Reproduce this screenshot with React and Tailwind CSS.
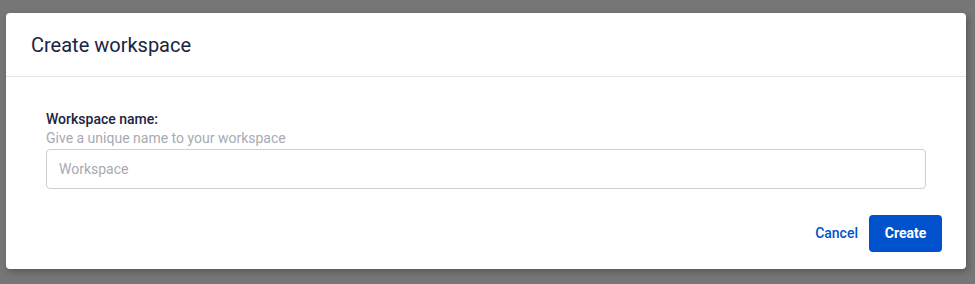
import React from 'react';

const App = () => {
  return (
    <div className="min-h-screen w-full bg-[#767676] pt-[13px] pl-[6px]" style={{ fontFamily: 'Roboto, "Liberation Sans", sans-serif' }}>
      <div className="w-[960px] h-[256px] bg-white rounded-[4px] shadow-[2px_3px_6px_rgba(0,0,0,0.25)] flex flex-col">
        <div className="h-[64px] flex items-center px-[25px] border-b border-[#e3e4e8]">
          <h2 className="text-[20px] text-[#1c2340] font-normal">Create workspace</h2>
        </div>
        <div className="px-[40px] pt-[32px]">
          <div className="text-[14px] leading-[20px] font-medium text-[#1c2340]">Workspace name:</div>
          <div className="text-[14px] leading-[18px] text-[#a8aab2]">Give a unique name to your workspace</div>
          <input
            className="mt-[2px] w-full h-[40px] border border-[#cdcfd4] rounded-[4px] px-[12px] text-[14px] text-[#333] placeholder:text-[#a8aab2] outline-none"
            placeholder="Workspace"
          />
        </div>
        <div className="flex justify-end items-center gap-[2px] px-[24px] mt-[26px]">
          <button className="h-[37px] px-[9px] text-[14px] font-medium text-[#0052cc]">Cancel</button>
          <button className="h-[37px] w-[73px] rounded-[4px] bg-[#0052cc] text-white text-[14px] font-bold">Create</button>
        </div>
      </div>
    </div>
  );
};

export default App;
